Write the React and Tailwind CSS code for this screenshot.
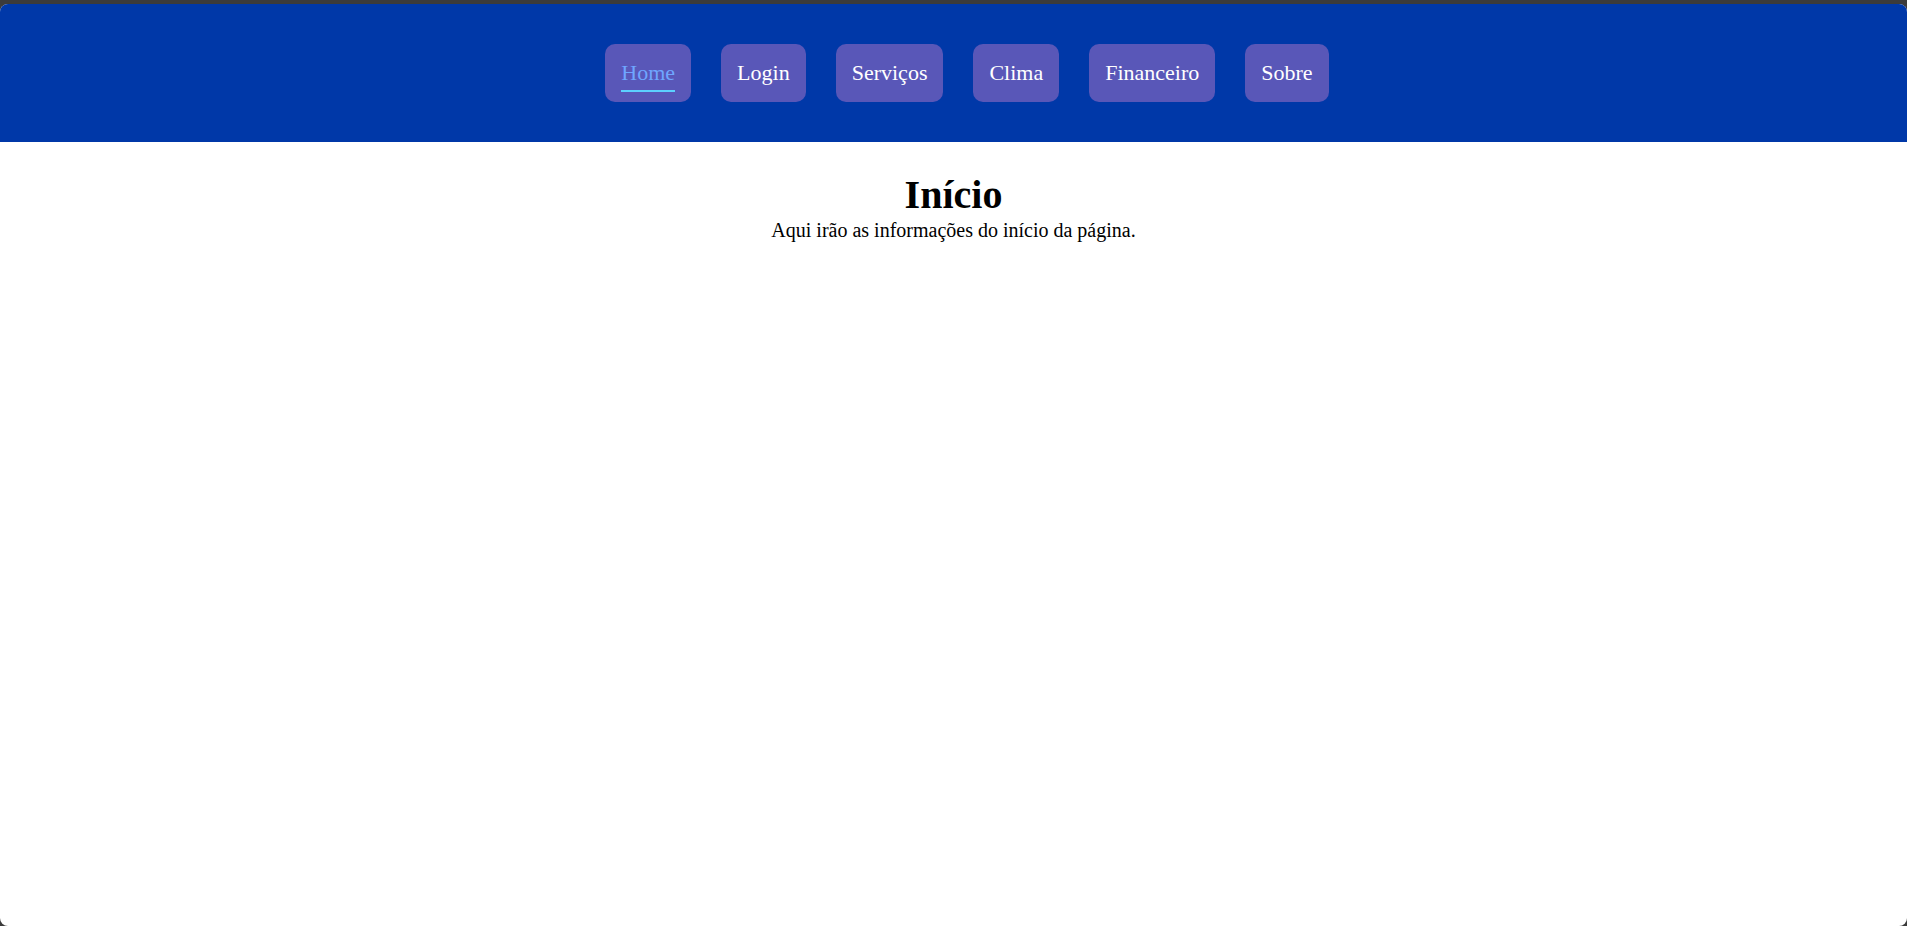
import React from "react";

const items = ["Home", "Login", "Serviços", "Clima", "Financeiro", "Sobre"];

export default function App() {
  return (
    <div
      className="w-full h-[926px] bg-[#3b3b3b] pt-[4px]"
      style={{ fontFamily: '"Liberation Serif", "Times New Roman", serif' }}
    >
      <div className="h-[922px] bg-white rounded-[8px] overflow-hidden flex flex-col">
        <nav className="bg-[#0038a8] h-[138px] flex items-center justify-center pl-[27px]">
          <ul className="flex items-center gap-[30px]">
            {items.map((it, i) => (
              <li key={it}>
                <a
                  href="#"
                  className="block bg-[#5957b8] rounded-[10px] px-[16px] py-[17px] text-[22px] leading-[24px]"
                >
                  {i === 0 ? (
                    <span className="relative inline-block text-[#6fa6ff]">
                      {it}
                      <span className="absolute left-0 right-0 bottom-[-7px] h-[2px] bg-[#5cd0ff]"></span>
                    </span>
                  ) : (
                    <span className="inline-block text-white">{it}</span>
                  )}
                </a>
              </li>
            ))}
          </ul>
        </nav>
        <main className="flex flex-col items-center pt-[31px] text-black">
          <h1 className="text-[40px] font-bold leading-[44px]">Início</h1>
          <p className="text-[20px] leading-[24px] pt-[1px]">
            Aqui irão as informações do início da página.
          </p>
        </main>
      </div>
    </div>
  );
}
